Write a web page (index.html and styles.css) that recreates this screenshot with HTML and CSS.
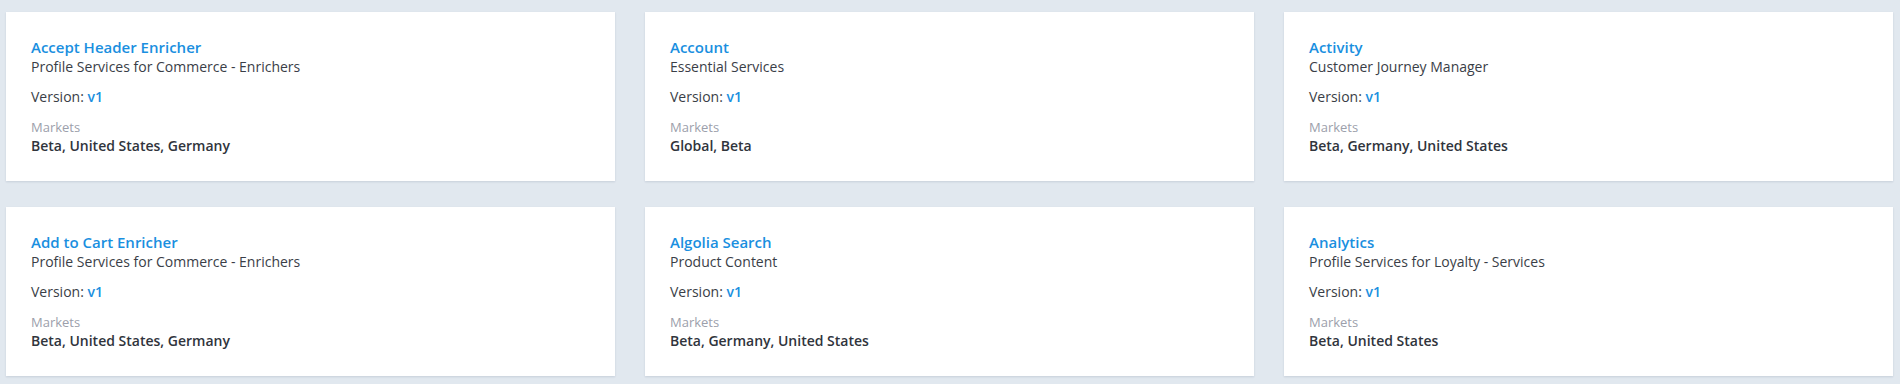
FILE: index.html
```html
<!DOCTYPE html>
<html lang="en">
<head>
<meta charset="utf-8">
<title>Services</title>
<link rel="stylesheet" href="styles.css">
</head>
<body>
<main class="grid">
  <article class="card">
    <a class="card-title" href="#">Accept Header Enricher</a>
    <div class="card-sub">Profile Services for Commerce - Enrichers</div>
    <div class="card-version">Version: <span class="v">v1</span></div>
    <div class="card-label">Markets</div>
    <div class="card-value">Beta, United States, Germany</div>
  </article>
  <article class="card">
    <a class="card-title" href="#">Account</a>
    <div class="card-sub">Essential Services</div>
    <div class="card-version">Version: <span class="v">v1</span></div>
    <div class="card-label">Markets</div>
    <div class="card-value">Global, Beta</div>
  </article>
  <article class="card">
    <a class="card-title" href="#">Activity</a>
    <div class="card-sub">Customer Journey Manager</div>
    <div class="card-version">Version: <span class="v">v1</span></div>
    <div class="card-label">Markets</div>
    <div class="card-value">Beta, Germany, United States</div>
  </article>
  <article class="card">
    <a class="card-title" href="#">Add to Cart Enricher</a>
    <div class="card-sub">Profile Services for Commerce - Enrichers</div>
    <div class="card-version">Version: <span class="v">v1</span></div>
    <div class="card-label">Markets</div>
    <div class="card-value">Beta, United States, Germany</div>
  </article>
  <article class="card">
    <a class="card-title" href="#">Algolia Search</a>
    <div class="card-sub">Product Content</div>
    <div class="card-version">Version: <span class="v">v1</span></div>
    <div class="card-label">Markets</div>
    <div class="card-value">Beta, Germany, United States</div>
  </article>
  <article class="card">
    <a class="card-title" href="#">Analytics</a>
    <div class="card-sub">Profile Services for Loyalty - Services</div>
    <div class="card-version">Version: <span class="v">v1</span></div>
    <div class="card-label">Markets</div>
    <div class="card-value">Beta, United States</div>
  </article>
</main>
</body>
</html>
```

FILE: styles.css
```css
html, body {
  margin: 0;
  padding: 0;
}
body {
  background: #e1e8ef;
  font-family: "Open Sans", "Noto Sans", sans-serif;
  color: #343841;
}
.grid {
  display: grid;
  grid-template-columns: repeat(3, 1fr);
  column-gap: 30px;
  row-gap: 26px;
  padding: 12px 7px 8px 6px;
}
.card {
  background: #ffffff;
  box-shadow: 0 1px 2px rgba(40, 60, 90, 0.14);
  padding: 25px 25px 25px 25px;
  display: flex;
  flex-direction: column;
}
.card-title {
  font-size: 15px;
  line-height: 20px;
  font-weight: 600;
  color: #1a8fe0;
  text-decoration: none;
}
.card-sub {
  font-size: 14px;
  line-height: 20px;
  color: #3a3e47;
}
.card-version {
  margin-top: 10px;
  font-size: 14px;
  line-height: 20px;
  color: #3a3e47;
}
.v {
  color: #1a8fe0;
  font-weight: 600;
}
.card-label {
  margin-top: 11px;
  font-size: 13px;
  line-height: 18px;
  color: #9ca0ab;
}
.card-value {
  font-size: 14px;
  line-height: 20px;
  font-weight: 600;
  color: #30343c;
}
```
